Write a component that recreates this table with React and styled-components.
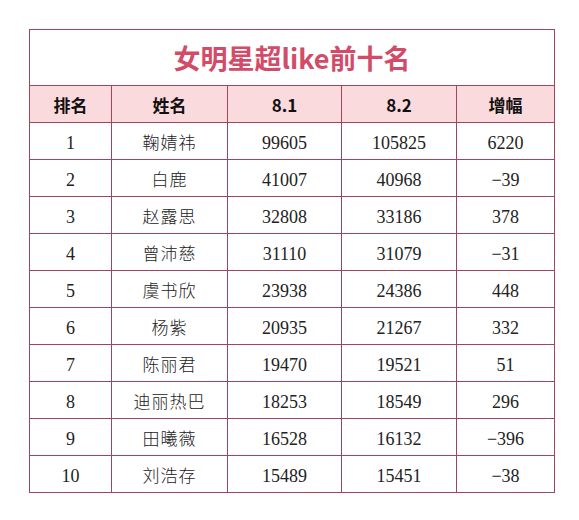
import React from "react";
import styled, { createGlobalStyle } from "styled-components";

const Global = createGlobalStyle`
  html, body { margin: 0; padding: 0; background: #ffffff; }
  body { width: 579px; height: 520px; overflow: hidden; }
`;

const Page = styled.div`
  padding: 29px 0 0 29px;
`;

const Table = styled.table`
  border-collapse: collapse;
  table-layout: fixed;
  width: 526px;
  border: 1px solid #9c4660;
`;

const TitleCell = styled.th`
  height: 55px;
  padding: 0;
  border: 1px solid #9c4660;
  color: #d24c69;
  font-family: "Noto Sans CJK SC", "Noto Sans", sans-serif;
  font-weight: 700;
  font-size: 27px;
  text-align: center;
  vertical-align: middle;
  background: #ffffff;
`;

const HeadCell = styled.th`
  height: 36px;
  padding: 0;
  border: 1px solid #9c4660;
  background: #fbdadd;
  color: #111111;
  font-family: "Noto Sans CJK SC", "Noto Sans", sans-serif;
  font-weight: 700;
  font-size: 17px;
  text-align: center;
  vertical-align: middle;
`;

const Cell = styled.td`
  height: 33px;
  padding: 3px 0 0 0;
  border: 1px solid #9c4660;
  color: #222222;
  font-family: "Liberation Serif", "Noto Sans CJK SC", serif;
  font-weight: 400;
  font-size: 18px;
  text-align: center;
  vertical-align: middle;
  line-height: 1;
`;

const Name = styled.span`
  font-family: "Noto Sans CJK SC", sans-serif;
  font-weight: 300;
  font-size: 17px;
  letter-spacing: 1px;
`;

const cols = [82, 116, 114, 115, 98];

const rows = [
  [1, "鞠婧祎", 99605, 105825, "6220"],
  [2, "白鹿", 41007, 40968, "-39"],
  [3, "赵露思", 32808, 33186, "378"],
  [4, "曾沛慈", 31110, 31079, "-31"],
  [5, "虞书欣", 23938, 24386, "448"],
  [6, "杨紫", 20935, 21267, "332"],
  [7, "陈丽君", 19470, 19521, "51"],
  [8, "迪丽热巴", 18253, 18549, "296"],
  [9, "田曦薇", 16528, 16132, "-396"],
  [10, "刘浩存", 15489, 15451, "-38"],
];

export default function App() {
  return (
    <Page>
      <Global />
      <Table>
        <colgroup>
          {cols.map((w, i) => (
            <col key={i} style={{ width: w }} />
          ))}
        </colgroup>
        <thead>
          <tr>
            <TitleCell colSpan={5}>女明星超like前十名</TitleCell>
          </tr>
          <tr>
            <HeadCell>排名</HeadCell>
            <HeadCell>姓名</HeadCell>
            <HeadCell>8.1</HeadCell>
            <HeadCell>8.2</HeadCell>
            <HeadCell>增幅</HeadCell>
          </tr>
        </thead>
        <tbody>
          {rows.map((r) => (
            <tr key={r[0]}>
              <Cell>{r[0]}</Cell>
              <Cell>
                <Name>{r[1]}</Name>
              </Cell>
              <Cell>{r[2]}</Cell>
              <Cell>{r[3]}</Cell>
              <Cell>{r[4].replace("-", "−")}</Cell>
            </tr>
          ))}
        </tbody>
      </Table>
    </Page>
  );
}
